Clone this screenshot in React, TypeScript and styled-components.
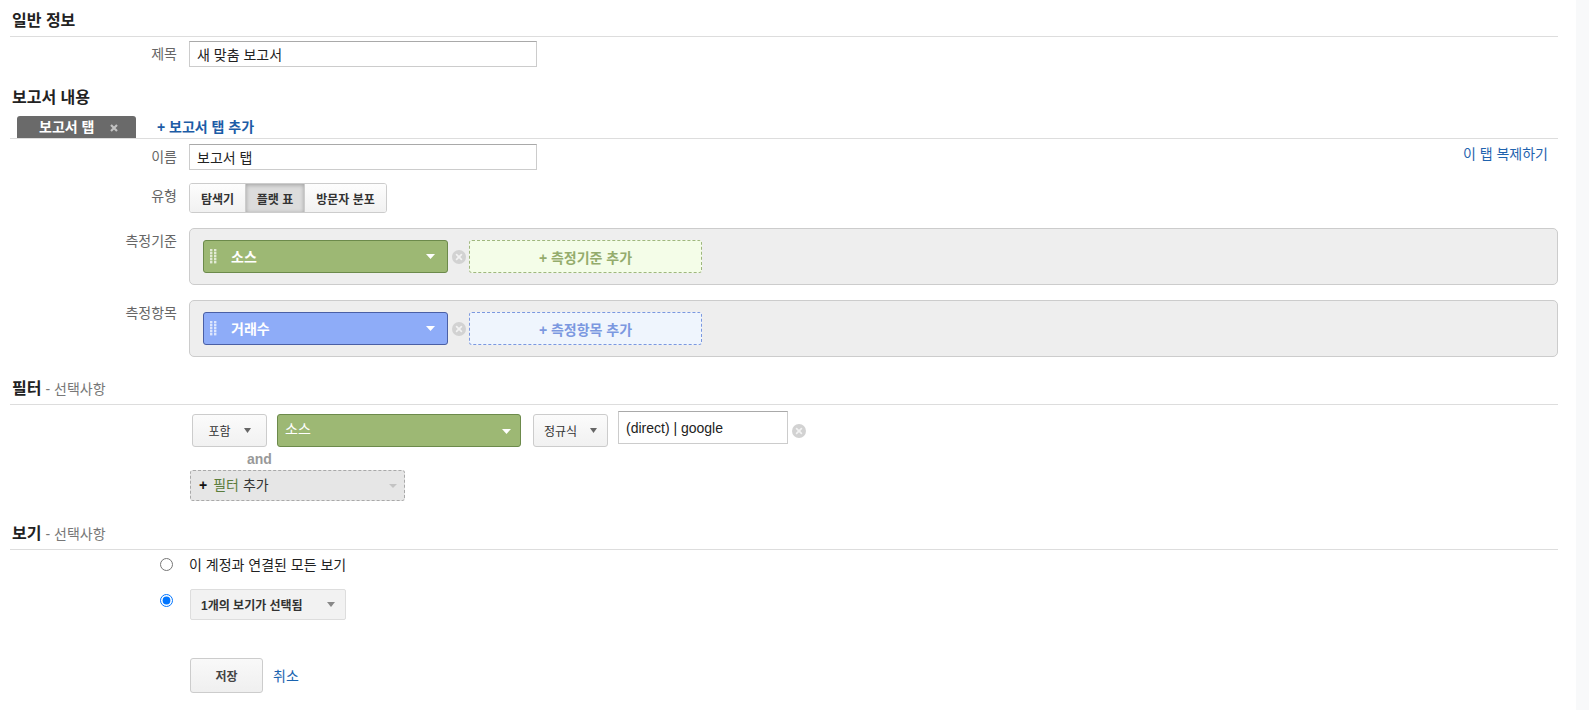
import React from "react";
import styled, { createGlobalStyle } from "styled-components";

const FONT = `"Liberation Sans", "Noto Sans CJK KR", Arial, sans-serif`;

const GlobalStyle = createGlobalStyle`
  html, body { margin: 0; padding: 0; background: #fff; }
  body { font-family: ${FONT}; color: #222; }
  *, *::before, *::after { box-sizing: border-box; }
`;

const Page = styled.div`
  display: flex;
  min-height: 710px;
`;

const Main = styled.main`
  flex: 1;
  padding: 0 18px 0 10px;
`;

const Gutter = styled.div`
  width: 13px;
  flex-shrink: 0;
  background: #f8f9fa;
`;

const SectionHeading = styled.h2<{ $mt: number; $rule?: boolean }>`
  margin: ${(p) => p.$mt}px 0 0;
  padding: 0 0 ${(p) => (p.$rule ? 5 : 0)}px 2px;
  font-size: 16px;
  line-height: 20px;
  font-weight: bold;
  color: #222;
  border-bottom: ${(p) => (p.$rule ? "1px solid #ddd" : "none")};
`;

const Optional = styled.span`
  margin-left: 4px;
  font-size: 14px;
  font-weight: normal;
  color: #777;
`;

const Row = styled.div<{ $mt: number }>`
  display: grid;
  grid-template-columns: 167px 1fr;
  column-gap: 12px;
  align-items: start;
  margin-top: ${(p) => p.$mt}px;
`;

const Label = styled.div`
  text-align: right;
  font-size: 14px;
  line-height: 26px;
  color: #666;
`;

const RadioCell = styled.div<{ $mt: number }>`
  display: flex;
  justify-content: flex-end;
  padding: ${(p) => p.$mt}px 4px 0 0;
`;

const Radio = styled.input`
  width: 13px;
  height: 13px;
  margin: 0;
`;

const Field = styled.div`
  display: flex;
  align-items: flex-start;
  min-width: 0;
`;

const TextInput = styled.input<{ $w: number; $h: number }>`
  width: ${(p) => p.$w}px;
  height: ${(p) => p.$h}px;
  border: 1px solid #ccc;
  border-top-color: #a9a9a9;
  padding: 0 7px;
  font-family: ${FONT};
  font-size: 14px;
  color: #222;
  background: #fff;
  outline: none;
`;

const DuplicateLink = styled.a`
  margin-left: auto;
  margin-right: 10px;
  font-size: 14px;
  line-height: 20px;
  color: #1f63ae;
  cursor: pointer;
`;

const TabBar = styled.div`
  display: flex;
  align-items: flex-end;
  height: 23px;
  margin-top: 8px;
  padding-left: 7px;
  border-bottom: 1px solid #ddd;
`;

const Tab = styled.div`
  display: flex;
  align-items: center;
  width: 119px;
  height: 22px;
  padding: 0 0 1px 22px;
  border-radius: 3px 3px 0 0;
  background: #6a6a6a;
  color: #fff;
  font-size: 14px;
  font-weight: bold;
  line-height: 20px;
`;

const TabClose = styled.span`
  display: flex;
  margin-left: 16px;
  padding-top: 2px;
`;

const AddTab = styled.a`
  align-self: center;
  margin-left: 21px;
  font-size: 14px;
  font-weight: bold;
  line-height: 20px;
  color: #1c5ca6;
  cursor: pointer;
`;

const SegGroup = styled.div`
  display: inline-flex;
  height: 30px;
  border: 1px solid #ccc;
  border-radius: 3px;
  overflow: hidden;
`;

const SegButton = styled.button<{ $w: number; $active?: boolean }>`
  width: ${(p) => p.$w}px;
  height: 100%;
  border: none;
  border-left: 1px solid #ccc;
  &:first-child { border-left: none; }
  padding: 0;
  background: ${(p) => (p.$active ? "#dcdcdc" : "linear-gradient(#fdfdfd, #f1f1f1)")};
  box-shadow: ${(p) => (p.$active ? "inset 0 1px 4px rgba(0,0,0,0.28)" : "none")};
  font-family: ${FONT};
  font-size: 12px;
  font-weight: bold;
  color: #333;
`;

const DropBox = styled.div`
  display: flex;
  align-items: center;
  padding: 11px 13px;
  border: 1px solid #ccc;
  border-radius: 5px;
  background: #eee;
`;

const Chip = styled.div<{ $bg: string; $border: string }>`
  display: flex;
  align-items: center;
  width: 245px;
  height: 33px;
  padding: 0 12px 0 6px;
  border: 1px solid ${(p) => p.$border};
  border-radius: 3px;
  background: ${(p) => p.$bg};
  color: #fff;
  font-size: 14px;
  font-weight: bold;
`;

const ChipText = styled.span`
  margin-left: 14px;
  line-height: 20px;
`;

const CaretWrap = styled.span`
  display: flex;
  margin-left: auto;
`;

const RemoveWrap = styled.span<{ $mt?: number }>`
  display: flex;
  margin: ${(p) => p.$mt ?? 0}px 3px 0 4px;
  align-self: ${(p) => (p.$mt === undefined ? "center" : "flex-start")};
`;

const AddSlot = styled.div<{ $bg: string; $border: string; $color: string }>`
  display: flex;
  align-items: center;
  justify-content: center;
  width: 233px;
  height: 33px;
  border: 1px dashed ${(p) => p.$border};
  border-radius: 3px;
  background: ${(p) => p.$bg};
  color: ${(p) => p.$color};
  font-size: 14px;
  font-weight: bold;
`;

const SelectButton = styled.div<{ $w: number }>`
  display: flex;
  align-items: center;
  justify-content: center;
  gap: 13px;
  width: ${(p) => p.$w}px;
  height: 33px;
  margin-top: 3px;
  border: 1px solid #ccc;
  border-radius: 3px;
  background: linear-gradient(#fbfbfb, #f1f1f1);
  font-size: 12px;
  color: #333;
`;

const SourceSelect = styled.div`
  display: flex;
  align-items: flex-start;
  width: 244px;
  height: 33px;
  margin: 3px 12px 0 10px;
  padding: 4px 9px 0 7px;
  border: 1px solid #6c8a4b;
  border-radius: 3px;
  background: #9db874;
  color: #fff;
  font-size: 14px;
  line-height: 20px;
`;

const SourceCaret = styled.span`
  display: flex;
  margin: 10px 0 0 auto;
`;

const FilterStack = styled.div`
  display: flex;
  flex-direction: column;
  align-items: flex-start;
`;

const FilterRow = styled.div`
  display: flex;
  align-items: flex-start;
  margin-left: 3px;
`;

const ValueInput = styled(TextInput)`
  margin-left: 10px;
`;

const AndText = styled.div`
  margin: 5px 0 0 58px;
  font-size: 14px;
  font-weight: bold;
  line-height: 14px;
  color: #999;
`;

const AddFilter = styled.div`
  display: flex;
  align-items: center;
  width: 215px;
  height: 31px;
  margin: 4px 0 0 1px;
  padding: 0 7px 2px 8px;
  border: 1px dashed #a9a9a9;
  border-radius: 3px;
  background: #e6e6e6;
  font-size: 14px;
  line-height: 20px;
  color: #333;
`;

const Plus = styled.span`
  font-weight: bold;
  color: #111;
  margin-right: 6px;
`;

const GreenWord = styled.span`
  color: #5b7d3c;
  margin-right: 4px;
`;

const AddFilterCaret = styled.span`
  display: flex;
  margin: 3px 0 0 auto;
`;

const RadioText = styled.div`
  font-size: 14px;
  line-height: 20px;
  color: #222;
`;

const ViewSelect = styled.div`
  display: flex;
  align-items: center;
  width: 156px;
  height: 31px;
  margin-left: 1px;
  padding: 0 10px 0 10px;
  border: 1px solid #ddd;
  border-radius: 2px;
  background: #f2f2f2;
  font-size: 12px;
  font-weight: bold;
  color: #333;
`;

const Actions = styled.div`
  display: flex;
  align-items: center;
  margin-left: 1px;
`;

const SaveButton = styled.button`
  width: 73px;
  height: 35px;
  padding: 0;
  border: 1px solid #ccc;
  border-radius: 3px;
  background: linear-gradient(#f9f9f9, #efefef);
  font-family: ${FONT};
  font-size: 12px;
  font-weight: bold;
  color: #444;
`;

const CancelLink = styled.a`
  margin-left: 10px;
  font-size: 14px;
  line-height: 20px;
  color: #1a63b0;
  cursor: pointer;
`;

const Caret = ({ color, w = 9, h = 5 }: { color: string; w?: number; h?: number }) => (
  <svg width={w} height={h} viewBox={`0 0 ${w} ${h}`}>
    <path d={`M0 0H${w}L${w / 2} ${h}Z`} fill={color} />
  </svg>
);

const RemoveIcon = () => (
  <svg width="14" height="14" viewBox="0 0 14 14">
    <circle cx="7" cy="7" r="7" fill="#d2d2d2" />
    <path d="M4.6 4.6l4.8 4.8M9.4 4.6l-4.8 4.8" stroke="#f2f2f2" strokeWidth="1.7" strokeLinecap="round" />
  </svg>
);

const CloseX = () => (
  <svg width="8" height="8" viewBox="0 0 8 8">
    <path d="M1 1l6 6M7 1l-6 6" stroke="#c2c2c2" strokeWidth="2.2" />
  </svg>
);

const Handle = ({ color }: { color: string }) => (
  <svg width="7" height="15" viewBox="0 0 7 15">
    {[0, 3, 6, 9, 12].map((y) =>
      [0, 4].map((x) => <rect key={`${x}-${y}`} x={x} y={y} width="2.4" height="2.4" fill={color} />)
    )}
  </svg>
);

export default function App() {
  return (
    <>
      <GlobalStyle />
      <Page>
        <Main>
          <SectionHeading $mt={11} $rule>일반 정보</SectionHeading>
          <Row $mt={4}>
            <Label>제목</Label>
            <Field>
              <TextInput $w={348} $h={26} defaultValue="새 맞춤 보고서" />
            </Field>
          </Row>

          <SectionHeading $mt={21}>보고서 내용</SectionHeading>
          <TabBar>
            <Tab>
              보고서 탭
              <TabClose>
                <CloseX />
              </TabClose>
            </Tab>
            <AddTab>+ 보고서 탭 추가</AddTab>
          </TabBar>

          <Row $mt={5}>
            <Label>이름</Label>
            <Field>
              <TextInput $w={348} $h={26} defaultValue="보고서 탭" />
              <DuplicateLink>이 탭 복제하기</DuplicateLink>
            </Field>
          </Row>

          <Row $mt={13}>
            <Label>유형</Label>
            <Field>
              <SegGroup>
                <SegButton $w={55}>탐색기</SegButton>
                <SegButton $w={59} $active>
                  플랫 표
                </SegButton>
                <SegButton $w={82}>방문자 분포</SegButton>
              </SegGroup>
            </Field>
          </Row>

          <Row $mt={15}>
            <Label>측정기준</Label>
            <DropBox>
              <Chip $bg="#9db874" $border="#6c8a4b">
                <Handle color="rgba(255,255,255,0.7)" />
                <ChipText>소스</ChipText>
                <CaretWrap>
                  <Caret color="#fff" />
                </CaretWrap>
              </Chip>
              <RemoveWrap>
                <RemoveIcon />
              </RemoveWrap>
              <AddSlot $bg="#f4fde8" $border="#9fb77e" $color="#94ac6c">
                + 측정기준 추가
              </AddSlot>
            </DropBox>
          </Row>

          <Row $mt={15}>
            <Label>측정항목</Label>
            <DropBox>
              <Chip $bg="#8eacf8" $border="#4a5fa5">
                <Handle color="rgba(255,255,255,0.7)" />
                <ChipText>거래수</ChipText>
                <CaretWrap>
                  <Caret color="#fff" />
                </CaretWrap>
              </Chip>
              <RemoveWrap>
                <RemoveIcon />
              </RemoveWrap>
              <AddSlot $bg="#eff5fd" $border="#7b98e0" $color="#7b98e0">
                + 측정항목 추가
              </AddSlot>
            </DropBox>
          </Row>

          <SectionHeading $mt={22} $rule>
            필터<Optional>- 선택사항</Optional>
          </SectionHeading>
          <Row $mt={6}>
            <div />
            <FilterStack>
              <FilterRow>
                <SelectButton $w={75}>
                  포함
                  <Caret color="#666" w={7} h={5} />
                </SelectButton>
                <SourceSelect>
                  소스
                  <SourceCaret>
                    <Caret color="#fff" />
                  </SourceCaret>
                </SourceSelect>
                <SelectButton $w={75}>
                  정규식
                  <Caret color="#666" w={7} h={5} />
                </SelectButton>
                <ValueInput $w={170} $h={33} defaultValue="(direct) | google" />
                <RemoveWrap $mt={13}>
                  <RemoveIcon />
                </RemoveWrap>
              </FilterRow>
              <AndText>and</AndText>
              <AddFilter>
                <Plus>+</Plus>
                <GreenWord>필터</GreenWord>추가
                <AddFilterCaret>
                  <Caret color="#c3c3c3" w={8} h={4} />
                </AddFilterCaret>
              </AddFilter>
            </FilterStack>
          </Row>

          <SectionHeading $mt={23} $rule>
            보기<Optional>- 선택사항</Optional>
          </SectionHeading>
          <Row $mt={5}>
            <RadioCell $mt={3}>
              <Radio type="radio" name="view" />
            </RadioCell>
            <RadioText>이 계정과 연결된 모든 보기</RadioText>
          </Row>
          <Row $mt={14}>
            <RadioCell $mt={5}>
              <Radio type="radio" name="view" defaultChecked />
            </RadioCell>
            <Field>
              <ViewSelect>
                1개의 보기가 선택됨
                <CaretWrap>
                  <Caret color="#888" w={8} h={5} />
                </CaretWrap>
              </ViewSelect>
            </Field>
          </Row>
          <Row $mt={38}>
            <div />
            <Actions>
              <SaveButton>저장</SaveButton>
              <CancelLink>취소</CancelLink>
            </Actions>
          </Row>
        </Main>
        <Gutter />
      </Page>
    </>
  );
}
